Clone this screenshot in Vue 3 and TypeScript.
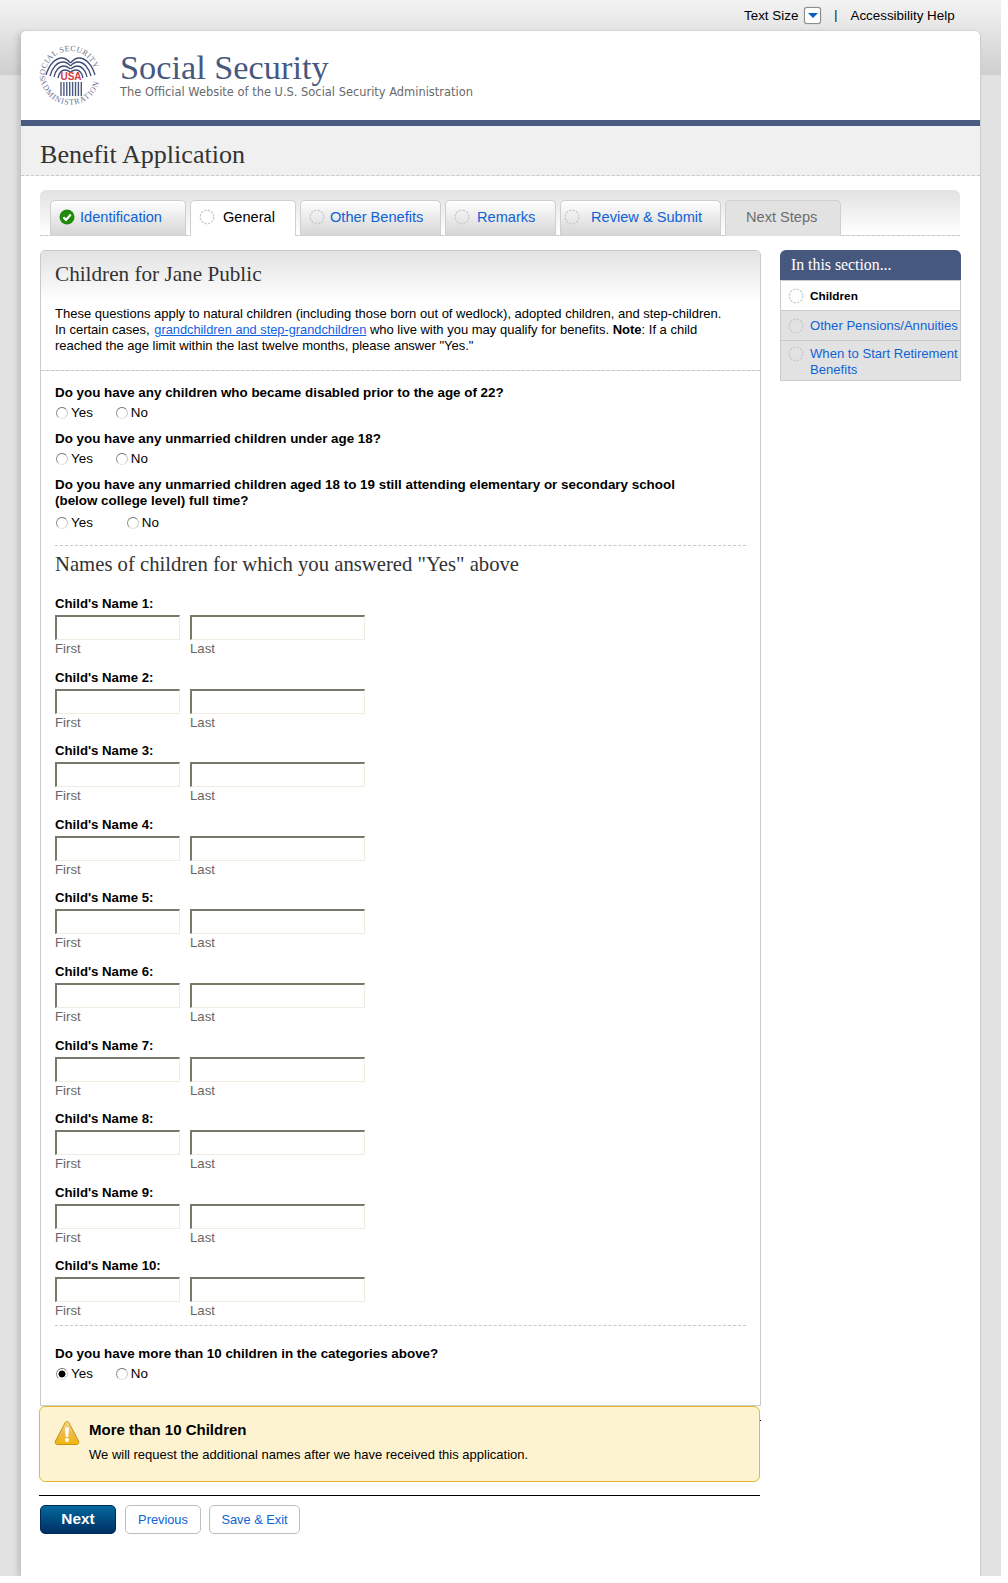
<template>
  <div class="page">
    <div class="utility">
      <span>Text Size</span>
      <span class="size-btn"><i></i></span>
      <span class="sep">|</span>
      <span>Accessibility Help</span>
    </div>

    <div class="card">
      <header class="brand">
        <svg class="logo" viewBox="0 0 60 61" width="60" height="61">
          <defs>
            <path id="arcTop" d="M5.5 36 A25 25 0 1 1 54.5 36" />
            <path id="arcBottom" d="M0.5 33 A29.8 29.8 0 0 0 59.5 35" />
          </defs>
          <text class="seal"><textPath href="#arcTop" startOffset="1">SOCIAL SECURITY</textPath></text>
          <text class="seal low"><textPath href="#arcBottom" startOffset="2">ADMINISTRATION</textPath></text>
          <g fill="none" stroke="#3f4d75" stroke-width="1.3">
            <path v-for="d in wingPaths" :key="d" :d="d" />
          </g>
          <g fill="none" stroke="#3f4d75" stroke-width="1.3" transform="translate(61) scale(-1 1)">
            <path v-for="d in wingPaths" :key="d" :d="d" />
          </g>
          <text x="31" y="35" class="usa">USA</text>
          <path
            d="M21 37 V51 M23.9 37 V51 M26.8 37 V51 M29.7 37 V51 M32.6 37 V51 M35.5 37 V51 M38.4 37 V51 M41.3 37 V51"
            stroke="#4a5b82"
            stroke-width="1.4"
          />
        </svg>
        <div class="brand-text">
          <div class="brand-name">Social Security</div>
          <div class="brand-tag">The Official Website of the U.S. Social Security Administration</div>
        </div>
      </header>

      <div class="title-band">
        <h1>Benefit Application</h1>
      </div>

      <div class="body">
        <nav class="tabs">
          <div
            v-for="tab in tabs"
            :key="tab.label"
            class="tab"
            :class="tab.state"
            :style="{ width: tab.width + 'px' }"
          >
            <svg v-if="tab.state === 'done'" class="tab-icon" viewBox="0 0 16 16" width="16" height="16">
              <circle cx="8" cy="8" r="7.5" fill="#1f8a0c" />
              <path d="M4.3 8.2 L7 10.9 L11.8 5.6" fill="none" stroke="#fff" stroke-width="2.2" />
            </svg>
            <svg v-else-if="tab.state !== 'locked'" class="tab-icon" viewBox="0 0 16 16" width="16" height="16">
              <circle cx="8" cy="8" r="6.8" fill="none" stroke="#c9c9c9" stroke-width="1.2" stroke-dasharray="2.4 1.2" />
            </svg>
            <span>{{ tab.label }}</span>
          </div>
        </nav>

        <div class="columns">
          <main class="main-col">
            <section class="panel">
              <div class="panel-head">
                <h2>Children for Jane Public</h2>
                <p>
                  These questions apply to natural children (including those born out of wedlock), adopted children, and step-children.
                  In certain cases, <a href="#">grandchildren and step-grandchildren</a> who live with you may qualify for benefits.
                  <b>Note</b>: If a child reached the age limit within the last twelve months, please answer "Yes."
                </p>
              </div>

              <div class="questions">
                <div v-for="q in questions" :key="q.text" class="question">
                  <div class="q-text">{{ q.text }}</div>
                  <div class="radios" :class="{ wide: q.wide }">
                    <label><input type="radio" :name="q.text" />Yes</label>
                    <label><input type="radio" :name="q.text" />No</label>
                  </div>
                </div>
              </div>

              <div class="names">
                <h3>Names of children for which you answered "Yes" above</h3>
                <div v-for="n in 10" :key="n" class="child">
                  <div class="child-label">Child's Name {{ n }}:</div>
                  <div class="child-fields">
                    <label class="first"><input type="text" /><span>First</span></label>
                    <label class="last"><input type="text" /><span>Last</span></label>
                  </div>
                </div>
              </div>

              <div class="more">
                <div class="q-text">Do you have more than 10 children in the categories above?</div>
                <div class="radios">
                  <label><input type="radio" name="more" checked />Yes</label>
                  <label><input type="radio" name="more" />No</label>
                </div>
              </div>
            </section>

            <div class="notice">
              <svg class="warn" viewBox="0 0 26 26" width="26" height="26">
                <defs>
                  <linearGradient id="warnFill" x1="0" y1="0" x2="0" y2="1">
                    <stop offset="0" stop-color="#f3d98a" />
                    <stop offset="0.55" stop-color="#eeb94a" />
                    <stop offset="1" stop-color="#f2b705" />
                  </linearGradient>
                </defs>
                <path d="M13 1.5 C14 1.5 14.6 2 15 3 L24.5 21 C25.3 23 24.5 24.5 22.5 24.5 H3.5 C1.5 24.5 .7 23 1.5 21 L11 3 C11.4 2 12 1.5 13 1.5 Z" fill="url(#warnFill)" stroke="#c98f12" />
                <path d="M11 7.5 H15 L14.2 17 H11.8 Z" fill="#fff" />
                <circle cx="13" cy="20" r="2" fill="#fff" />
              </svg>
              <div>
                <div class="notice-title">More than 10 Children</div>
                <div class="notice-text">We will request the additional names after we have received this application.</div>
              </div>
            </div>

            <div class="actions">
              <button class="btn-next" type="button">Next</button>
              <button class="btn prev" type="button">Previous</button>
              <button class="btn save" type="button">Save &amp; Exit</button>
            </div>
          </main>

          <aside class="side">
            <div class="side-head">In this section...</div>
            <div
              v-for="item in sideItems"
              :key="item.label"
              class="side-item"
              :class="{ current: item.current, tall: item.tall }"
            >
              <svg viewBox="0 0 16 16" width="16" height="16">
                <circle cx="8" cy="8" r="6.8" fill="none" stroke="#c9c9c9" stroke-width="1.2" stroke-dasharray="2.4 1.2" />
              </svg>
              <span>{{ item.label }}</span>
            </div>
          </aside>
        </div>
      </div>
    </div>
  </div>
</template>

<script setup lang="ts">
interface Tab {
  label: string
  state: 'done' | 'active' | 'todo' | 'locked'
  width: number
}

const tabs: Tab[] = [
  { label: 'Identification', state: 'done', width: 136 },
  { label: 'General', state: 'active', width: 106 },
  { label: 'Other Benefits', state: 'todo', width: 141 },
  { label: 'Remarks', state: 'todo', width: 111 },
  { label: 'Review & Submit', state: 'todo', width: 161 },
  { label: 'Next Steps', state: 'locked', width: 116 }
]

const questions = [
  { text: 'Do you have any children who became disabled prior to the age of 22?', wide: false },
  { text: 'Do you have any unmarried children under age 18?', wide: false },
  {
    text: 'Do you have any unmarried children aged 18 to 19 still attending elementary or secondary school (below college level) full time?',
    wide: true
  }
]

const sideItems = [
  { label: 'Children', current: true, tall: false },
  { label: 'Other Pensions/Annuities', current: false, tall: false },
  { label: 'When to Start Retirement Benefits', current: false, tall: true }
]

// feathers of the left wing, mirrored for the right one
const wingPaths = [
  'M6 30 C9 20 15 13 22 13 C26 13 28 15 30.5 18',
  'M10 31 C12 23 17 17 23 17 C26 17 28 18 30.5 21',
  'M14 32 C15 26 19 21 24 21 C26 21 28 22 30.5 24',
  'M18 33 C19 28 21 25 25 25 C27 25 29 26 30.5 27'
]
</script>

<style>
html,
body {
  background: #fff;
}
</style>

<style scoped>
.page {
  position: relative;
  width: 1001px;
  height: 1576px;
  box-sizing: border-box;
  padding-top: 31px;
  overflow: hidden;
  background: linear-gradient(#f3f3f3 0, #cfcfcf 75px, #e2e2e2 75px, #e2e2e2 100%);
  font-family: 'Liberation Sans', Arial, sans-serif;
  font-size: 13px;
  color: #000;
}

.utility {
  position: absolute;
  top: 6px;
  left: 744px;
  display: flex;
  align-items: center;
  height: 18px;
  white-space: nowrap;
  font-size: 13.4px;
}

.size-btn {
  display: flex;
  align-items: center;
  justify-content: center;
  box-sizing: border-box;
  width: 17px;
  height: 17px;
  margin-left: 6px;
  background: #fff;
  border: 1px solid #8d8d8d;
  border-radius: 3px;
  box-shadow: 0 0 1px #777;
}

.size-btn i {
  width: 0;
  height: 0;
  margin-top: 1px;
  border-style: solid;
  border-width: 5px 5px 0;
  border-color: #0b5fc4 transparent transparent;
}

.sep {
  margin: 0 13px;
  font-size: 12px;
}

.card {
  width: 959px;
  height: 1545px;
  margin-left: 21px;
  background: #fff;
  border-radius: 5px 5px 0 0;
  box-shadow: -3px 2px 6px rgba(0, 0, 0, 0.16), 1px 0 0 #d4d4d4, 0 -1px 0 #dcdcdc;
}

.brand {
  display: flex;
  align-items: flex-start;
  box-sizing: border-box;
  height: 95px;
  border-bottom: 6px solid #4a5b82;
  padding: 14px 0 0 19px;
}

.logo {
  flex: none;
  overflow: visible;
}

.seal {
  font-family: 'Liberation Serif', serif;
  font-size: 8px;
  letter-spacing: 0.35px;
  fill: #6c6f93;
}

.seal.low {
  letter-spacing: 0.9px;
}

.usa {
  font-family: 'Liberation Sans', sans-serif;
  font-size: 10px;
  font-weight: 700;
  text-anchor: middle;
  fill: #d33b45;
}

.brand-text {
  margin-left: 20px;
  padding-top: 4px;
}

.brand-name {
  height: 36px;
  font-family: 'Liberation Serif', serif;
  font-size: 34.3px;
  line-height: 36px;
  color: #47587f;
  white-space: nowrap;
}

.brand-tag {
  margin-top: 0;
  font-family: 'DejaVu Sans', sans-serif;
  font-size: 11.45px;
  line-height: 14px;
  color: #6a6a6a;
  white-space: nowrap;
}

.title-band {
  box-sizing: border-box;
  height: 50px;
  padding: 15px 0 0 19px;
  background: #f0f0f0;
  border-bottom: 1px dashed #c8c8c8;
}

h1 {
  margin: 0;
  font-family: 'Liberation Serif', serif;
  font-size: 26.1px;
  font-weight: 400;
  line-height: 28px;
  color: #333;
}

.body {
  padding: 14px 19px 0;
}

.tabs {
  display: flex;
  gap: 4px;
  box-sizing: border-box;
  width: 920px;
  height: 46px;
  padding: 10px 0 0 10px;
  border-radius: 6px 6px 0 0;
  background: linear-gradient(#e2e2e2, #fff);
  border-bottom: 1px dashed #c8c8c8;
}

.tab {
  display: flex;
  align-items: center;
  box-sizing: border-box;
  height: 36px;
  padding: 0 0 4px 9px;
  border: 1px solid #cfcfcf;
  border-bottom: 0;
  border-radius: 5px 5px 0 0;
  background: linear-gradient(#fff, #d4d4d4);
  font-size: 14.6px;
  color: #0f62d6;
  white-space: nowrap;
}

.tab-icon {
  flex: none;
  margin-right: 5px;
  margin-left: -1px;
}

.tab.active {
  background: #fff;
  color: #000;
}

.tab.active .tab-icon {
  margin-right: 8px;
}

.tab.todo:nth-child(3) .tab-icon {
  margin-right: 5px;
}

.tab.todo:nth-child(4) .tab-icon {
  margin-right: 7px;
}

.tab.todo:nth-child(5) {
  padding-left: 4px;
}

.tab.todo:nth-child(5) .tab-icon {
  margin-right: 11px;
}

.tab.locked {
  padding-left: 20px;
  background: #e2e2e2;
  color: #6d6d6d;
}

.columns {
  display: flex;
  align-items: flex-start;
  margin-top: 14px;
}

.main-col {
  width: 721px;
  flex: none;
}

.panel {
  box-sizing: border-box;
  height: 1156px;
  border: 1px solid #cacaca;
  border-radius: 5px 5px 0 0;
}

.panel-head {
  height: 120px;
  box-sizing: border-box;
  padding: 12px 14px 0;
  border-bottom: 1px dashed #c8c8c8;
  background: linear-gradient(#e2e2e2, #fff 50px);
  border-radius: 4px 4px 0 0;
}

h2 {
  margin: 0;
  font-family: 'Liberation Serif', serif;
  font-size: 21.2px;
  font-weight: 400;
  line-height: 22px;
  color: #333;
}

.panel-head p {
  width: 672px;
  margin: 21px 0 0;
  line-height: 16px;
}

a {
  margin-left: 1px;
  font-size: 12.8px;
  color: #0f62e6;
}

.questions {
  height: 174px;
  box-sizing: border-box;
  padding: 14px 14px 0;
}

.question {
  margin-bottom: 9px;
}

.q-text {
  width: 650px;
  font-size: 13.4px;
  font-weight: 700;
  line-height: 16px;
}

.radios {
  display: flex;
  gap: 22px;
  height: 18px;
  margin-top: 3px;
  align-items: center;
  font-size: 13.4px;
  line-height: 16px;
}

.radios.wide {
  gap: 33px;
  margin-top: 5px;
}

.radios label {
  display: flex;
  align-items: center;
}

.radios input {
  appearance: none;
  box-sizing: border-box;
  width: 12px;
  height: 12px;
  margin: 0 3px 0 1px;
  border: 1px solid;
  border-color: #6f6f6f #c9c9c9 #e4e4e4 #8f8f8f;
  border-radius: 50%;
  background: #fff;
}

.radios input:checked {
  background: radial-gradient(circle, #000 0, #000 3.2px, #fff 3.8px);
}

.names {
  margin: 0 14px;
  padding-top: 7px;
  height: 781px;
  box-sizing: border-box;
  border-top: 1px dashed #c8c8c8;
  border-bottom: 1px dashed #c8c8c8;
}

h3 {
  margin: 0 0 21px;
  font-family: 'Liberation Serif', serif;
  font-size: 20.7px;
  font-weight: 400;
  line-height: 22px;
  color: #333;
}

.child {
  height: 73.6px;
}

.child-label {
  font-size: 13.2px;
  font-weight: 700;
  line-height: 16px;
}

.child-fields {
  display: flex;
  gap: 10px;
  margin-top: 3px;
}

.child-fields label {
  display: block;
}

.first input {
  width: 125px;
}

.last input {
  width: 175px;
}

.child-fields input {
  display: block;
  box-sizing: border-box;
  height: 25px;
  margin: 0;
  padding: 0;
  border-style: solid;
  border-width: 2px 1px 1px 2px;
  border-color: #7a786b #efece1 #efece1 #7a786b;
  background: #fff;
}

.child-fields span {
  display: block;
  margin-top: 1px;
  font-size: 13.2px;
  line-height: 16px;
  color: #666;
}

.more {
  padding: 20px 14px 0;
}

.notice {
  position: relative;
  display: flex;
  box-sizing: border-box;
  width: 721px;
  height: 76px;
  margin-left: -1px;
  padding: 13px 14px 0 14px;
  background: #fdf3d0;
  border: 1px solid #e6b82e;
  border-radius: 6px;
}

.notice::after {
  content: '';
  position: absolute;
  top: 13px;
  right: -2px;
  width: 1px;
  height: 1px;
  background: #000;
}

.warn {
  flex: none;
  margin-right: 9px;
}

.notice-title {
  font-size: 15px;
  font-weight: 700;
  line-height: 20px;
}

.notice-text {
  margin-top: 7px;
  line-height: 16px;
}

.actions {
  display: flex;
  gap: 8px;
  width: 721px;
  height: 40px;
  box-sizing: border-box;
  margin-top: 13px;
  margin-left: -1px;
  padding: 9px 0 0 1px;
  border-top: 1px solid #000;
}

.actions button {
  box-sizing: border-box;
  height: 29px;
  margin: 0;
  padding: 0;
  font-family: inherit;
  border-radius: 5px;
}

.btn-next {
  width: 76px;
  margin-right: 1px !important;
  padding-bottom: 2px !important;
  border: 1px solid #002a5c;
  background: linear-gradient(#02699d, #002e63);
  color: #fff;
  font-size: 15.4px;
  font-weight: 700;
}

.btn {
  border: 1px solid #bdbdbd;
  background: #fff;
  color: #0f62d6;
  font-size: 12.8px;
}

.btn.prev {
  width: 76px;
}

.btn.save {
  width: 91px;
}

.side {
  width: 181px;
  margin-left: 19px;
  flex: none;
  border-bottom: 1px solid #ccc;
}

.side-head {
  box-sizing: border-box;
  height: 30px;
  padding: 7px 11px 0;
  background: #47587f;
  border-radius: 6px 6px 0 0;
  font-family: 'Liberation Serif', serif;
  font-size: 15.8px;
  line-height: 16px;
  color: #fff;
}

.side-item {
  display: flex;
  align-items: flex-start;
  box-sizing: border-box;
  padding: 7px 0 6px 7px;
  border: 1px solid #ccc;
  border-width: 1px 1px 0;
  background: #e2e2e2;
  color: #0f62d6;
  font-size: 13.1px;
  line-height: 16px;
}

.side-item.tall {
  padding: 5px 0 2px 7px;
}

.side-item svg {
  flex: none;
  margin-right: 6px;
}

.side-item.current {
  background: #fff;
  color: #000;
  font-weight: 700;
  font-size: 11.8px;
}
</style>
